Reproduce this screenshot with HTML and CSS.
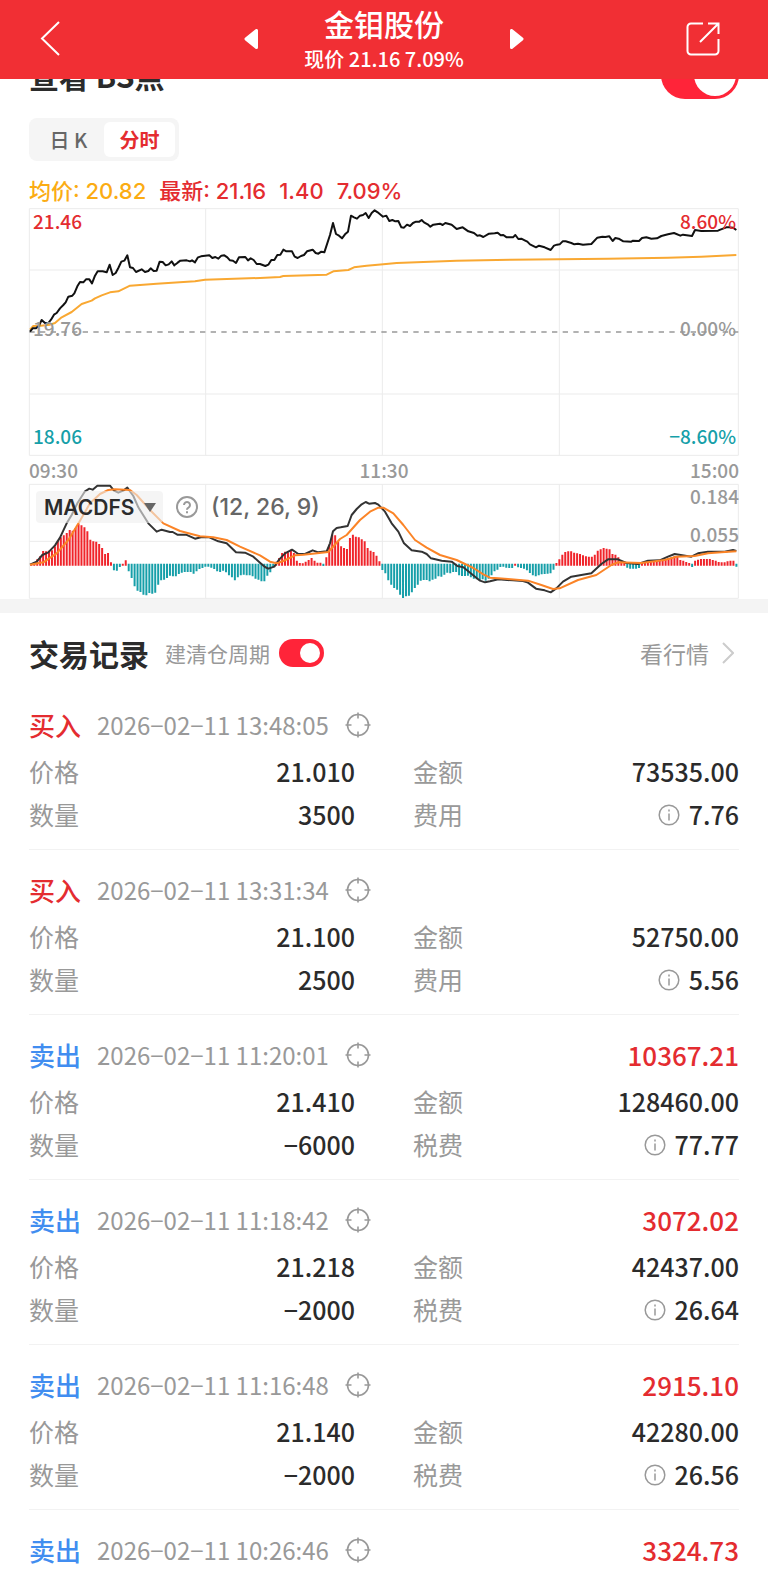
FILE: index.html
```html
<!DOCTYPE html>
<html lang="zh-CN">
<head>
  <meta charset="UTF-8">
  <meta name="viewport" content="width=device-width, initial-scale=1">
  <title>金钼股份</title>
  <link rel="stylesheet" href="styles.css">
</head>
<body>

  <!-- 顶部导航 -->
  <header class="topbar">
    <button class="icon-btn back" aria-label="返回">
      <svg width="20" height="36" viewBox="0 0 20 36"><path d="M19 1L2 17.500l17 16.500" fill="none" stroke="#fff" stroke-width="2"/></svg>
    </button>
    <div class="stock-nav">
      <button class="icon-btn" aria-label="上一只">
        <svg width="14" height="20" viewBox="0 0 14 20"><path d="M12.500 1.500v17L2 10z" fill="#fff" stroke="#fff" stroke-width="3" stroke-linejoin="round"/></svg>
      </button>
      <div class="stock">
        <h1>金钼股份</h1>
        <p>现价 21.16 7.09%</p>
      </div>
      <button class="icon-btn" aria-label="下一只">
        <svg width="14" height="20" viewBox="0 0 14 20"><path d="M1.500 1.500v17L12 10z" fill="#fff" stroke="#fff" stroke-width="3" stroke-linejoin="round"/></svg>
      </button>
    </div>
    <button class="icon-btn share" aria-label="分享">
      <svg width="34" height="34" viewBox="0 0 34 34" fill="none" stroke="#fff" stroke-width="2"><path d="M17 1.500H5A3.500 3.500 0 0 0 1.500 5v24A3.500 3.500 0 0 0 5 32.500h24a3.500 3.500 0 0 0 3.500-3.500V17"/><path d="M22 1.500h10.500V12M32 2L14 20"/></svg>
    </button>
  </header>

  <main>
    <section class="panel">
      <div class="bs-row">
        <h2 id="bsTitle">查看 BS点</h2>
        <input type="checkbox" class="switch large" aria-labelledby="bsTitle" checked>
      </div>

      <div class="tabs">
        <button>日 K</button>
        <button class="active">分时</button>
      </div>

      <div class="quote">
        <span class="avg">均价: 20.82</span>
        <span>最新: 21.16</span>
        <span>1.40</span>
        <span>7.09%</span>
      </div>

      <!-- 分时图 -->
      <div class="chart">
        <span class="mark top left red">21.46</span>
        <span class="mark top right red">8.60%</span>
        <span class="mark middle left">19.76</span>
        <span class="mark middle right">0.00%</span>
        <span class="mark bottom left teal">18.06</span>
        <span class="mark bottom right teal">−8.60%</span>
        <svg viewBox="87 37 2130 744">
          <path class="grid" d="M88 39H2215V779H88zM88 223H2215M88 595H2215M617 39V779M1147 39V779M1678 39V779"/>
          <path class="zero" d="M88 409H2215"/>
          <polyline class="line avg-line" points="90,402 100,391 115,391 150,387 165,382 185,365 215,349 245,325 275,315 285,308 305,299 330,290 355,287 390,270 470,264 585,257 615,252 780,247 840,244 850,241 980,237 1000,227 1045,223 1062,215 1100,210 1150,206 1190,202 1290,198 1370,195 1530,192 1824,189 2004,186 2104,183 2209,178"/>
          <polyline class="line price-line" points="90,408 98,398 108,398 117,390 125,373 135,382 145,382 153,372 162,357 170,352 180,338 190,328 197,320 205,303 217,300 223,293 232,272 240,259 250,260 258,251 268,251 276,263 285,240 293,227 308,227 320,230 329,207 338,238 347,232 355,217 364,198 373,195 382,179 390,215 399,217 408,229 425,221 435,229 445,226 452,218 461,226 470,225 479,198 488,199 497,209 506,206 515,197 523,209 533,201 541,195 560,194 570,197 576,194 585,200 594,185 603,182 628,179 637,187 646,184 655,189 664,180 673,179 682,185 690,194 699,195 708,202 717,185 736,184 744,194 752,188 761,193 770,205 780,205 796,211 805,207 814,193 823,193 832,178 841,177 850,162 859,167 876,167 884,183 893,187 903,181 912,178 921,167 938,162 947,172 955,174 964,168 973,170 990,118 999,82 1008,115 1017,120 1026,128 1035,116 1044,108 1053,60 1062,65 1071,69 1080,60 1089,58 1097,52 1106,67 1115,52 1124,44 1133,50 1149,63 1159,60 1168,76 1177,73 1186,77 1195,76 1204,95 1212,96 1221,87 1230,91 1239,82 1248,78 1258,78 1265,73 1272,80 1283,86 1291,93 1300,87 1320,84 1328,88 1336,82 1355,87 1370,100 1388,95 1405,107 1422,112 1432,120 1440,119 1450,124 1467,114 1484,113 1493,111 1502,119 1510,118 1520,125 1539,125 1546,118 1555,130 1564,129 1574,134 1582,138 1590,146 1608,155 1617,150 1634,155 1652,163 1662,150 1671,147 1679,146 1688,137 1697,137 1714,142 1723,146 1734,144 1749,147 1774,145 1792,126 1807,123 1816,124 1828,122 1838,136 1846,127 1856,129 1870,137 1894,138 1899,135 1917,136 1926,127 1939,125 1954,129 1971,128 1984,121 2004,116 2022,112 2041,120 2049,117 2076,121 2085,103 2104,106 2154,105 2161,102 2179,95 2187,95 2199,96 2209,103"/>
        </svg>
      </div>
      <div class="times">
        <span>09:30</span>
        <span>11:30</span>
        <span>15:00</span>
      </div>

      <!-- MACD 副图 -->
      <div class="chart macd">
        <svg viewBox="87 42 2130 345">
          <path class="grid" d="M88 43H2215V385H88zM88 214H2215M617 43V385M1147 43V385M1678 43V385"/>
          <path class="bar up" id="barsUp"/>
          <path class="bar down" id="barsDown"/>
          <polyline class="line dif-line" points="90,284 110,275 127,255 145,247 165,226 180,203 200,160 215,135 232,100 255,64 268,56 278,59 292,47 330,47 342,62 355,68 370,62 382,53 400,78 415,112 445,160 470,185 485,179 510,186 518,186 532,194 558,194 585,206 603,202 628,202 655,214 680,220 708,247 735,248 760,260 780,278 795,291 805,296 823,290 838,268 855,250 876,239 895,252 915,252 938,241 955,247 980,244 990,220 999,184 1010,174 1022,172 1043,168 1055,135 1070,117 1085,103 1097,96 1107,101 1125,99 1135,104 1155,125 1175,160 1195,185 1212,220 1235,241 1265,245 1280,252 1293,265 1325,272 1355,275 1372,288 1390,292 1415,312 1440,332 1455,337 1470,334 1495,328 1539,331 1569,333 1584,338 1608,356 1634,361 1652,367 1669,355 1689,335 1714,320 1744,315 1774,310 1804,282 1824,268 1854,268 1879,279 1914,282 1944,272 1979,271 2004,260 2024,252 2074,260 2094,250 2124,245 2174,245 2199,240 2209,243"/>
          <polyline class="line dea-line" points="90,284 130,277 170,250 205,210 240,152 270,100 300,72 325,60 345,58 390,60 410,75 450,120 490,160 540,183 600,199 640,202 680,210 720,230 780,256 810,275 830,280 850,273 885,256 910,254 985,246 1020,207 1040,195 1080,150 1110,125 1135,113 1150,113 1180,130 1210,165 1245,210 1280,233 1320,255 1370,270 1420,294 1450,313 1470,323 1495,325 1524,327 1584,332 1624,345 1659,357 1679,355 1734,330 1789,315 1834,285 1854,277 1924,279 1994,270 2029,260 2084,258 2124,250 2164,247 2209,244"/>
        </svg>
        <div class="indicator">
          <div class="picker">
            <select aria-label="指标">
              <option>MACDFS</option>
            </select>
            <svg width="12" height="9" viewBox="0 0 12 9"><path d="M0 0h12L6 9z" fill="#666"/></svg>
          </div>
          <button class="icon-btn" aria-label="指标说明">
            <svg width="22" height="22" viewBox="0 0 22 22" fill="none" stroke="#999" stroke-width="2"><circle cx="11" cy="11" r="10"/><path d="M8 9a3 3 0 1 1 4.500 2.600Q11 12.400 11 13.800M11 15.200v2"/></svg>
          </button>
          <span>(12, 26, 9)</span>
        </div>
        <div class="scale">
          <span>0.184</span>
          <span>0.055</span>
        </div>
      </div>
    </section>

    <section class="panel records">
      <div class="records-head">
        <h2>交易记录</h2>
        <label for="cycle">建清仓周期</label>
        <input type="checkbox" class="switch" id="cycle" checked>
        <a href="#">看行情
          <svg width="12" height="22" viewBox="0 0 12 22"><path d="M1 1l10 10L1 21" fill="none" stroke="#ccc" stroke-width="2"/></svg>
        </a>
      </div>
      <div id="recordList"></div>
    </section>
  </main>

  <script>
    // MACD 柱，正数为红柱，负数为绿柱
    const bars = [
      3, 8, 16, 25, 41, 40, 42, 43, 55, 72, 82, 88, 95, 104, 102, 110, 122, 118, 112, 100,
      75, 70, 69, 62, 50, 32, 35, 7, -17, -18, -7, 3, 13, -20, -40, -65, -78, -82, -90, -92,
      -85, -87, -84, -60, -47, -45, -40, -33, -35, -35, -28, -24, -22, -22, -22, -27, -20, -13, -10, -6,
      -6, -9, -13, -20, -22, -18, -23, -32, -38, -47, -38, -32, -30, -32, -32, -35, -42, -45, -50, -50,
      -33, -23, -8, 9, 20, 35, 39, 37, 45, 35, 12, 5, 4, 9, 14, 20, 12, 6, 6, -4,
      22, 60, 90, 88, 70, 55, 50, 47, 80, 90, 84, 82, 76, 70, 50, 42, 38, 27, 10, -16,
      -26, -47, -60, -70, -75, -90, -100, -95, -93, -83, -70, -60, -48, -46, -46, -50, -45, -42, -35, -36,
      -30, -24, -26, -22, -22, -32, -34, -34, -33, -38, -42, -44, -46, -44, -48, -42, -32, -20, -15, -7,
      -6, -9, -10, -10, 3, -8, -10, -12, -17, -25, -32, -35, -32, -29, -28, -27, -26, -15, 5, 16,
      30, 38, 40, 40, 36, 34, 32, 28, 25, 24, 24, 30, 42, 46, 50, 48, 46, 32, 30, 22,
      12, 5, -9, -12, -12, -12, -10, 8, 10, 12, 12, 12, 12, 12, 14, 15, 20, 22, 25, 24,
      14, 12, 8, 5, -7, 12, 15, 17, 17, 17, 17, 14, 12, 8, 7, 7, 10, 12, 12, -6
    ];

    let up = '';
    let down = '';
    bars.forEach((v, i) => {
      const x = (94 + i * 8.85).toFixed(1);
      if (v > 0) {
        up += `M${x} 287V${284 - v}`;
      } else {
        down += `M${x} 281V${284 - v}`;
      }
    });
    document.getElementById('barsUp').setAttribute('d', up);
    document.getElementById('barsDown').setAttribute('d', down);

    const records = [
      { type: 'buy', time: '2026−02−11 13:48:05', price: '21.010', count: '3500', amount: '73535.00', fee: '7.76' },
      { type: 'buy', time: '2026−02−11 13:31:34', price: '21.100', count: '2500', amount: '52750.00', fee: '5.56' },
      { type: 'sell', time: '2026−02−11 11:20:01', profit: '10367.21', price: '21.410', count: '−6000', amount: '128460.00', fee: '77.77' },
      { type: 'sell', time: '2026−02−11 11:18:42', profit: '3072.02', price: '21.218', count: '−2000', amount: '42437.00', fee: '26.64' },
      { type: 'sell', time: '2026−02−11 11:16:48', profit: '2915.10', price: '21.140', count: '−2000', amount: '42280.00', fee: '26.56' },
      { type: 'sell', time: '2026−02−11 10:26:46', profit: '3324.73' }
    ];

    const aim = '<svg width="26" height="26" viewBox="0 0 26 26" fill="none" stroke="#999" stroke-width="1.600"><circle cx="13" cy="13" r="10.500"/><path d="M13 .5v6M13 19.500v6M.5 13h6M19.500 13h6"/></svg>';
    const info = '<svg width="22" height="22" viewBox="0 0 22 22" fill="none" stroke="#999" stroke-width="1.500"><circle cx="11" cy="11" r="9.800"/><path d="M11 9.500v7M11 5.500v2"/></svg>';

    document.getElementById('recordList').innerHTML = records.map(r => {
      const sell = r.type === 'sell';
      const detail = r.price ? `
        <dl>
          <div><dt>价格</dt><dd>${r.price}</dd></div>
          <div><dt>金额</dt><dd>${r.amount}</dd></div>
          <div><dt>数量</dt><dd>${r.count}</dd></div>
          <div><dt>${sell ? '税费' : '费用'}</dt><dd>${info}${r.fee}</dd></div>
        </dl>` : '';
      return `
        <article class="record">
          <div class="record-head">
            <strong class="${r.type}">${sell ? '卖出' : '买入'}</strong>
            <time>${r.time}</time>
            <button class="icon-btn" aria-label="定位">${aim}</button>
            ${r.profit ? `<span class="profit">${r.profit}</span>` : ''}
          </div>${detail}
        </article>`;
    }).join('');
  </script>
</body>
</html>
```
FILE: styles.css
```css
* {
  box-sizing: border-box;
}
body {
  margin: 0;
  background: #fff;
  color: #2b2b2b;
  font-family: "Noto Sans CJK SC", "Noto Sans", sans-serif;
  font-size: 20px;
}
h1, h2, p, dl, dd {
  margin: 0;
}
button, select {
  font: inherit;
  color: inherit;
  border: none;
  background: none;
  padding: 0;
  cursor: pointer;
}
svg {
  display: block;
}
.icon-btn {
  flex: none;
}

/* 顶部导航 */
.topbar {
  position: fixed;
  z-index: 10;
  top: 0;
  left: 0;
  right: 0;
  height: 79px;
  padding: 0 40px 2px;
  display: grid;
  grid-template-columns: 1fr auto 1fr;
  align-items: center;
  background: #f12f34;
  color: #fff;
}
.back {
  justify-self: start;
}
.share {
  justify-self: end;
  padding-right: 8px;
}
.stock-nav {
  display: flex;
  align-items: center;
  gap: 46px;
}
.stock {
  text-align: center;
}
.stock h1 {
  font-size: 30px;
  font-weight: 500;
  line-height: 40px;
}
.stock p {
  font-weight: 500;
  line-height: 32px;
}

.panel {
  padding: 0 29px;
}
main {
  padding-top: 51px;
}

/* 开关 */
.switch {
  appearance: none;
  flex: none;
  margin: 0;
  width: 45px;
  height: 28px;
  padding: 4px;
  border-radius: 24px;
  background: #ddd;
  display: flex;
}
.switch::before {
  content: "";
  width: 20px;
  height: 20px;
  border-radius: 50%;
  background: #fff;
}
.switch:checked {
  background: #ff2439;
  justify-content: flex-end;
}
.switch.large {
  width: 78px;
  height: 48px;
  padding: 3px;
}
.switch.large::before {
  width: 42px;
  height: 42px;
}

.bs-row {
  display: flex;
  justify-content: space-between;
  align-items: center;
}
.bs-row h2, .records-head h2 {
  font-size: 30px;
  font-weight: 700;
  line-height: 40px;
}

.tabs {
  display: inline-flex;
  margin-top: 19px;
  padding: 4px;
  border-radius: 8px;
  background: #f5f5f5;
  color: #666;
}
.tabs button {
  width: 71px;
  line-height: 35px;
  font-weight: 500;
  border-radius: 6px;
}
.tabs .active {
  background: #fff;
  color: #e42c30;
  font-weight: 700;
}

.quote {
  display: flex;
  gap: 13px;
  margin: 15px 0 2px;
  font-family: Inter, "Noto Sans CJK SC", sans-serif;
  font-size: 22px;
  font-weight: 500;
  line-height: 30px;
  color: #e42c30;
}
.avg {
  color: #fbac13;
}

/* 图表 */
.chart {
  position: relative;
}
.chart svg {
  overflow: visible;
}
.chart > svg {
  width: 100%;
}
.grid {
  fill: none;
  stroke: #ebebeb;
  stroke-width: 3;
}
.zero {
  stroke: #999;
  stroke-width: 4;
  stroke-dasharray: 16 16;
}
.line {
  fill: none;
  stroke-width: 6;
  stroke-linejoin: round;
}
.price-line {
  stroke: #111;
}
.avg-line {
  stroke: #f9a832;
}
.dif-line {
  stroke: #333;
}
.dea-line {
  stroke: #fb8427;
}
.bar {
  stroke-width: 6;
}
.up {
  stroke: #f0242b;
}
.down {
  stroke: #169fa9;
}
.mark {
  position: absolute;
  font-size: 19px;
  font-weight: 500;
  line-height: 26px;
  color: #999;
}
.left {
  left: 4px;
}
.right {
  right: 3px;
}
.top {
  top: 0;
}
.middle {
  top: 107px;
}
.bottom {
  bottom: 7px;
}
.red {
  color: #e42c30;
}
.teal {
  color: #169fa9;
}
.times {
  display: flex;
  justify-content: space-between;
  font-size: 19px;
  font-weight: 500;
  line-height: 28px;
  color: #999;
}
.indicator {
  position: absolute;
  top: 7px;
  left: 7px;
  display: flex;
  align-items: center;
  gap: 13px;
  font-family: Inter, sans-serif;
  font-size: 23px;
  font-weight: 500;
  color: #666;
}
.picker {
  display: flex;
  align-items: center;
  gap: 9px;
  padding: 0 7px 0 8px;
  height: 32px;
  border-radius: 4px;
  background: rgba(238, 238, 238, 0.6);
}
.picker select {
  appearance: none;
  font-size: 21px;
  font-weight: 600;
  color: #2b2b2b;
}
.scale {
  position: absolute;
  top: 1px;
  right: 0;
  display: grid;
  gap: 16px;
  font-size: 19px;
  font-weight: 500;
  line-height: 22px;
  color: #999;
}

/* 交易记录 */
.records {
  border-top: 14px solid #f4f4f4;
}
.records-head {
  display: flex;
  align-items: center;
  padding: 20px 0 12px;
  color: #999;
}
.records-head h2 {
  color: #2b2b2b;
}
.records-head label {
  margin: 0 9px 0 16px;
  font-size: 21px;
}
.records-head a {
  display: flex;
  align-items: center;
  gap: 13px;
  margin-left: auto;
  padding-right: 5px;
  font-size: 23px;
  line-height: 40px;
  color: #999;
  text-decoration: none;
}
.record {
  padding: 22px 0 13px;
  border-bottom: 1px solid #f2f2f2;
}
.record-head {
  display: flex;
  align-items: center;
  gap: 16px;
  margin-bottom: 7px;
  font-size: 26px;
  line-height: 36px;
}
.record-head strong {
  font-weight: 500;
}
.record-head time {
  font-size: 24px;
  color: #999;
}
.buy, .profit {
  color: #e42c30;
}
.sell {
  color: #418df0;
}
.profit {
  margin-left: auto;
  font-weight: 500;
}
.record dl {
  display: grid;
  grid-template-columns: 1fr 1fr;
  column-gap: 58px;
  line-height: 43px;
}
.record dl div {
  display: flex;
  justify-content: space-between;
}
.record dt {
  font-size: 25px;
  color: #999;
}
.record dd {
  display: flex;
  align-items: center;
  gap: 9px;
  font-size: 25px;
  font-weight: 500;
}
```
